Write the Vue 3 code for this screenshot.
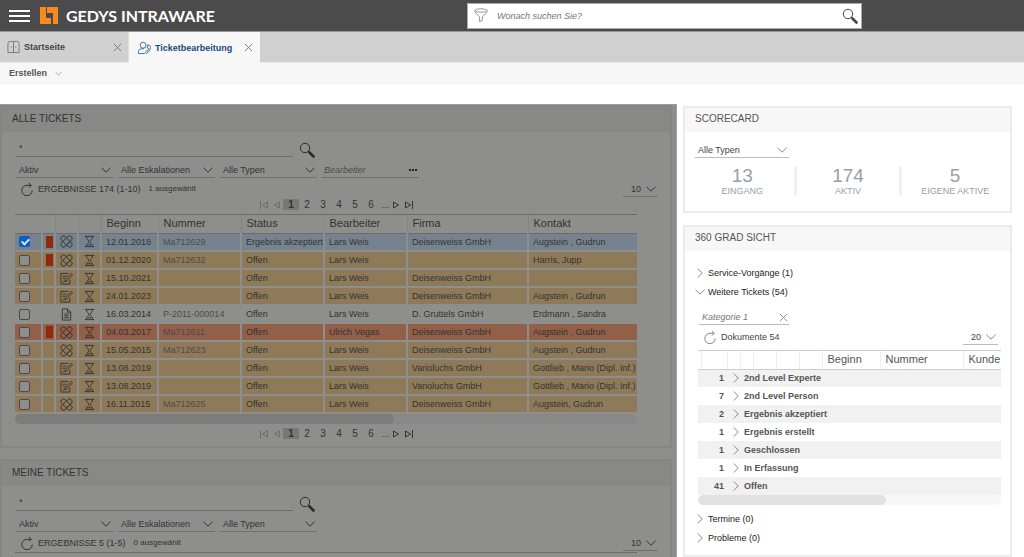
<script setup>
import { ref } from 'vue'

const filters = ['Aktiv', 'Alle Eskalationen', 'Alle Typen']
const pages = [1, 2, 3, 4, 5, 6]
const columns = ['Beginn', 'Nummer', 'Status', 'Bearbeiter', 'Firma', 'Kontakt']

const tickets = ref([
  { checked: true, tone: 'blue', flag: true, icon: 'patch', cells: ['12.01.2018', 'Ma712629', 'Ergebnis akzeptiert', 'Lars Weis', 'Deisenweiss GmbH', 'Augstein , Gudrun'] },
  { checked: false, tone: 'tan', flag: true, icon: 'patch', cells: ['01.12.2020', 'Ma712632', 'Offen', 'Lars Weis', '', 'Harris, Jupp'] },
  { checked: false, tone: 'tan', flag: false, icon: 'edit', cells: ['15.10.2021', '', 'Offen', 'Lars Weis', 'Deisenweiss GmbH', ''] },
  { checked: false, tone: 'tan', flag: false, icon: 'edit', cells: ['24.01.2023', '', 'Offen', 'Lars Weis', 'Deisenweiss GmbH', 'Augstein , Gudrun'] },
  { checked: false, tone: 'plain', flag: false, icon: 'doc', cells: ['16.03.2014', 'P-2011-000014', 'Offen', 'Lars Weis', 'D. Gruttels GmbH', 'Erdmann , Sandra'] },
  { checked: false, tone: 'red', flag: true, icon: 'patch', cells: ['04.03.2017', 'Ma712611', 'Offen', 'Ulrich Vegas', 'Deisenweiss GmbH', 'Augstein , Gudrun'] },
  { checked: false, tone: 'tan', flag: false, icon: 'patch', cells: ['15.05.2015', 'Ma712623', 'Offen', 'Lars Weis', 'Deisenweiss GmbH', 'Augstein , Gudrun'] },
  { checked: false, tone: 'tan', flag: false, icon: 'edit', cells: ['13.08.2019', '', 'Offen', 'Lars Weis', 'Varioluchs GmbH', 'Gottlieb , Mario (Dipl. Inf.)'] },
  { checked: false, tone: 'tan', flag: false, icon: 'edit', cells: ['13.08.2019', '', 'Offen', 'Lars Weis', 'Varioluchs GmbH', 'Gottlieb , Mario (Dipl. Inf.)'] },
  { checked: false, tone: 'tan', flag: false, icon: 'patch', cells: ['16.11.2015', 'Ma712625', 'Offen', 'Lars Weis', 'Deisenweiss GmbH', 'Augstein, Gudrun'] }
])

const panels = [
  { title: 'ALLE TICKETS', result: 'ERGEBNISSE 174 (1-10)', selected: '1 ausgewählt', full: true },
  { title: 'MEINE TICKETS', result: 'ERGEBNISSE 5 (1-5)', selected: '0 ausgewählt', full: false }
]

const scores = [
  { value: 13, label: 'EINGANG' },
  { value: 174, label: 'AKTIV' },
  { value: 5, label: 'EIGENE AKTIVE' }
]

const groups = [
  { count: 1, name: '2nd Level Experte' },
  { count: 7, name: '2nd Level Person' },
  { count: 2, name: 'Ergebnis akzeptiert' },
  { count: 1, name: 'Ergebnis erstellt' },
  { count: 1, name: 'Geschlossen' },
  { count: 1, name: 'In Erfassung' },
  { count: 41, name: 'Offen' }
]
</script>

<template>
  <div class="app">
    <svg class="defs" aria-hidden="true">
      <symbol id="chev" viewBox="0 0 10 6"><path d="M.5 .8l4.500 4.400L9.500 .8" /></symbol>
      <symbol id="chev-right" viewBox="0 0 6 10"><path d="M.8 .5l4.400 4.500L.8 9.500" /></symbol>
      <symbol id="cross" viewBox="0 0 10 10"><path d="M1 1l8 8M9 1l-8 8" /></symbol>
      <symbol id="lens" viewBox="0 0 16 16">
        <circle cx="6" cy="6" r="4.7" />
        <path d="M9.3 9.3l1.5 1.5" />
        <path d="M10.5 10.5l4 4" stroke-width="2.6" stroke-linecap="round" />
      </symbol>
      <symbol id="reload" viewBox="0 0 12 13">
        <path d="M11.200 7.500A5.200 5.200 0 1 1 6 2.300H10M8 0l2.300 2.300L8 4.600" />
      </symbol>
      <symbol id="patch" viewBox="0 0 14 14">
        <g transform="rotate(45 7 7)">
          <rect x="-.4" y="4.2" width="14.8" height="5.6" rx="2.8" />
          <path d="M4.2 4.2V2.400a2.800 2.800 0 0 1 5.600 0v9.200a2.800 2.800 0 0 1-5.600 0V4.200M9.800 4.200v5.600" />
        </g>
      </symbol>
      <symbol id="edit" viewBox="0 0 14 14">
        <path d="M10.500 8.500v4.500h-9.500V1.500h8M3 4.500h4M3 6.800h2.500M3 10.800l2.500-.8M5.300 10.300l.7-2.500L12 1.500l1.500 1.300L7.700 9.300z" />
      </symbol>
      <symbol id="doc" viewBox="0 0 14 14">
        <path d="M2.500 1h5.500l3.500 3.500V13h-9zM8 1v3.500h3.500M4.500 6.500h5M4.500 8.500h5M4.500 10.500h5" />
      </symbol>
      <symbol id="glass" viewBox="0 0 12 14">
        <path d="M1 1.500h10M1 12.500h10M2.500 1.500c0 3 2.700 3.500 2.700 5.500s-2.700 2.500-2.700 5.500M9.500 1.500c0 3-2.700 3.500-2.700 5.500s2.700 2.500 2.700 5.500M4 10.500h4" />
      </symbol>
      <symbol id="prev" viewBox="0 0 8 8"><path d="M6.500 1v6L1.500 4z" /></symbol>
      <symbol id="first" viewBox="0 0 8 8"><path d="M7.500 1v6L2.500 4zM.5 0v8" /></symbol>
      <symbol id="next" viewBox="0 0 8 8"><path d="M1.500 1v6l5-3z" /></symbol>
      <symbol id="last" viewBox="0 0 8 8"><path d="M.5 1v6l5-3zM7.500 0v8" /></symbol>
    </svg>

    <header class="top">
      <button class="burger" aria-label="Menü"><i></i><i></i><i></i></button>
      <svg class="logo" viewBox="0 0 18 17">
        <path fill="#f98a1c" d="M0 0h6v11h5v6H0zM7 0h11v17h-5V6H7z" />
      </svg>
      <span class="brand">GEDYS INTRAWARE</span>
      <form class="search" @submit.prevent>
        <svg class="ico funnel" viewBox="0 0 14 15">
          <ellipse cx="7" cy="2.500" rx="6" ry="1.700" />
          <path d="M1 2.500v1.500l4.600 5v4.700l2.800-1.200V9L13 4V2.500" />
        </svg>
        <input type="text" placeholder="Wonach suchen Sie?" aria-label="Suche" />
        <button aria-label="Suchen"><svg class="ico lens"><use href="#lens" /></svg></button>
      </form>
    </header>

    <nav class="tabs">
      <div class="tab">
        <svg class="ico tabico" viewBox="0 0 14 14">
          <path d="M1 13V3.500Q1 1 3.500 1h7Q13 1 13 3.500V13zM7 1v12M4 7h1.500M8.500 7H10" />
        </svg>
        <a href="#">Startseite</a>
        <button aria-label="Startseite schließen"><svg class="ico x"><use href="#cross" /></svg></button>
      </div>
      <div class="tab active">
        <svg class="ico tabico" viewBox="0 0 14 14">
          <circle cx="5.500" cy="4" r="3.200" />
          <path d="M7.500 13H.5v-2.500Q.5 8 3.500 7.800h3M10.500 3.500q3 0 3 3.200T9.500 13l-1.500-1.400 1.200-1.600 1 .5q1.200-1.200 1.200-3l-1.400-.5z" />
        </svg>
        <a href="#">Ticketbearbeitung</a>
        <button aria-label="Ticketbearbeitung schließen"><svg class="ico x"><use href="#cross" /></svg></button>
      </div>
    </nav>

    <div class="toolbar">
      <button>Erstellen <svg class="ico chev small"><use href="#chev" /></svg></button>
    </div>

    <main class="main">
      <div class="dim">
        <section v-for="p in panels" :key="p.title" class="panel">
          <h2>{{ p.title }}</h2>
          <div class="query">
            <input type="text" value="*" :aria-label="p.title + ' Suche'" />
            <button aria-label="Suchen"><svg class="ico lens"><use href="#lens" /></svg></button>
          </div>
          <div class="filters">
            <label v-for="f in filters" :key="f" class="pick">
              <select :aria-label="f"><option>{{ f }}</option></select>
              <svg class="ico chev"><use href="#chev" /></svg>
            </label>
            <div v-if="p.full" class="person">
              <input type="text" placeholder="Bearbeiter" aria-label="Bearbeiter" />
              <button aria-label="Bearbeiter auswählen"><i></i><i></i><i></i></button>
            </div>
          </div>
          <div class="results">
            <button aria-label="Aktualisieren"><svg class="ico reload"><use href="#reload" /></svg></button>
            <span class="count">{{ p.result }}</span>
            <small>{{ p.selected }}</small>
            <label class="pick size">
              <select aria-label="Anzahl"><option>10</option></select>
              <svg class="ico chev"><use href="#chev" /></svg>
            </label>
          </div>
          <template v-if="p.full">
            <div class="pager">
              <button class="off" aria-label="Erste Seite"><svg class="ico"><use href="#first" /></svg></button>
              <button class="off" aria-label="Vorige Seite"><svg class="ico"><use href="#prev" /></svg></button>
              <button v-for="n in pages" :key="n" class="num" :class="{ on: n === 1 }">{{ n }}</button>
              <span>...</span>
              <button aria-label="Nächste Seite"><svg class="ico"><use href="#next" /></svg></button>
              <button aria-label="Letzte Seite"><svg class="ico"><use href="#last" /></svg></button>
            </div>
            <div class="grid">
              <table>
                <colgroup>
                  <col class="c-check" /><col class="c-flag" /><col class="c-ico" /><col class="c-ico" />
                  <col class="c-date" /><col class="c-mid" /><col class="c-mid" /><col class="c-mid" />
                  <col class="c-firm" /><col />
                </colgroup>
                <thead>
                  <tr>
                    <th colspan="2"></th><th></th><th></th>
                    <th v-for="c in columns" :key="c">{{ c }}</th>
                  </tr>
                </thead>
                <tbody>
                  <tr v-for="(t, i) in tickets" :key="i" :class="t.tone">
                    <td class="box"><input v-model="t.checked" type="checkbox" :aria-label="'Ticket ' + t.cells[0]" /></td>
                    <td class="flag"><i v-if="t.flag"></i></td>
                    <td class="sym"><svg class="ico"><use :href="'#' + t.icon" /></svg></td>
                    <td class="sym"><svg class="ico"><use href="#glass" /></svg></td>
                    <td v-for="(c, j) in t.cells" :key="j" :class="{ soft: j === 1 }">{{ c }}</td>
                  </tr>
                </tbody>
              </table>
            </div>
            <div class="scroll"><i></i></div>
            <div class="pager bottom">
              <button class="off" aria-label="Erste Seite"><svg class="ico"><use href="#first" /></svg></button>
              <button class="off" aria-label="Vorige Seite"><svg class="ico"><use href="#prev" /></svg></button>
              <button v-for="n in pages" :key="n" class="num" :class="{ on: n === 1 }">{{ n }}</button>
              <span>...</span>
              <button aria-label="Nächste Seite"><svg class="ico"><use href="#next" /></svg></button>
              <button aria-label="Letzte Seite"><svg class="ico"><use href="#last" /></svg></button>
            </div>
          </template>
          <div v-else class="grid stub"></div>
        </section>
      </div>

      <aside class="side">
        <section class="panel">
          <h2>SCORECARD</h2>
          <label class="pick type">
            <select aria-label="Typ"><option>Alle Typen</option></select>
            <svg class="ico chev"><use href="#chev" /></svg>
          </label>
          <div class="scores">
            <div v-for="s in scores" :key="s.label"><b>{{ s.value }}</b><span>{{ s.label }}</span></div>
          </div>
        </section>

        <section class="panel view">
          <h2>360 GRAD SICHT</h2>
          <button class="node first"><svg class="ico right"><use href="#chev-right" /></svg>Service-Vorgänge (1)</button>
          <button class="node"><svg class="ico chev"><use href="#chev" /></svg>Weitere Tickets (54)</button>
          <div class="category">
            <input type="text" placeholder="Kategorie 1" aria-label="Kategorie 1" />
            <button aria-label="Kategorie leeren"><svg class="ico x"><use href="#cross" /></svg></button>
          </div>
          <div class="results">
            <button aria-label="Aktualisieren"><svg class="ico reload"><use href="#reload" /></svg></button>
            <span>Dokumente 54</span>
            <label class="pick size">
              <select aria-label="Anzahl"><option>20</option></select>
              <svg class="ico chev"><use href="#chev" /></svg>
            </label>
          </div>
          <div class="grid">
            <table>
              <colgroup>
                <col class="s-a" /><col class="s-b" /><col class="s-c" /><col class="s-c" /><col class="s-d" />
                <col class="s-d" /><col class="s-d" /><col class="s-date" /><col class="s-num" /><col />
              </colgroup>
              <thead>
                <tr><th v-for="n in 7" :key="n"></th><th>Beginn</th><th>Nummer</th><th>Kunde</th></tr>
              </thead>
              <tbody>
                <tr v-for="g in groups" :key="g.name">
                  <td colspan="2" class="amount">{{ g.count }}</td>
                  <td colspan="8" class="name">
                    <button><svg class="ico right"><use href="#chev-right" /></svg>{{ g.name }}</button>
                  </td>
                </tr>
              </tbody>
            </table>
          </div>
          <div class="scroll"><i></i></div>
          <button class="node after"><svg class="ico right"><use href="#chev-right" /></svg>Termine (0)</button>
          <button class="node"><svg class="ico right"><use href="#chev-right" /></svg>Probleme (0)</button>
        </section>
      </aside>
    </main>
  </div>
</template>

<style>
body { background: #fff; }
</style>

<style scoped>
.app {
  height: 100vh;
  overflow: hidden;
  display: flex;
  flex-direction: column;
  font-family: "Liberation Sans", Arial, sans-serif;
  font-size: 9px;
  line-height: 12px;
  color: #444;
}
.app * { box-sizing: border-box; }
.defs { position: absolute; width: 0; height: 0; }
button, input, select {
  font: inherit;
  color: inherit;
  background: none;
  border: 0;
  padding: 0;
  margin: 0;
  min-width: 0;
  outline: 0;
  border-radius: 0;
}
button { display: flex; align-items: center; text-align: left; }
select { appearance: none; }
a { color: inherit; text-decoration: none; }
.ico { fill: none; stroke: currentColor; stroke-width: 1; overflow: visible; flex: none; display: block; }
.chev { width: 10px; height: 6px; }
.chev.small { width: 7px; height: 5px; }
.right { width: 6px; height: 10px; }
.x { width: 9px; height: 9px; }
.lens { width: 16px; height: 16px; color: #444; }
.reload { width: 12px; height: 13px; }

.top {
  height: 32px;
  flex: none;
  background: #4b4b4b;
  border-bottom: 1px solid #999;
  display: flex;
  align-items: center;
  padding-left: 9px;
}
.burger { width: 21px; flex-direction: column; gap: 3px; }
.burger i { width: 21px; height: 2px; background: #fff; }
.logo { width: 18px; height: 17px; margin-left: 10px; flex: none; }
.brand {
  margin-left: 8px;
  flex: 1;
  color: #fff;
  font-family: Lato, "Open Sans", sans-serif;
  font-size: 16px;
  font-weight: 700;
  line-height: 24px;
  white-space: nowrap;
}
.search {
  width: 395px;
  height: 26px;
  margin-right: 162px;
  background: #fff;
  border: 1px solid #aaa;
  display: flex;
  align-items: center;
  padding: 0 3px 0 6px;
}
.funnel { width: 14px; height: 15px; color: #999; }
.search input { flex: 1; margin-left: 9px; font-style: italic; }
input::placeholder { color: #777; opacity: 1; }

.tabs {
  height: 31px;
  flex: none;
  background: #d0d0d0;
  border-bottom: 1px solid #ececec;
  display: flex;
}
.tab {
  width: 129px;
  height: 30px;
  display: flex;
  align-items: center;
  padding: 0 6px 0 7px;
  font-weight: bold;
  border-right: 1px solid #ddd;
}
.tab .tabico { width: 13px; height: 14px; color: #777; }
.tab a { flex: 1; margin-left: 4px; }
.tab button { color: #777; }
.tab.active { width: 131px; height: 31px; background: #f7f7f7; color: #174a7c; padding: 0 7px 0 9px; border: 0; }
.tab.active .tabico { color: #3f6c9c; }

.toolbar { height: 22px; flex: none; background: #f7f7f7; padding: 4px 9px; font-weight: bold; color: #555; }
.toolbar svg { margin-left: 8px; color: #888; }

.main {
  flex: 1;
  min-height: 0;
  margin-top: 19px;
  display: grid;
  grid-template-columns: minmax(0, 1fr) 341px;
  column-gap: 6px;
}
.dim {
  background: #8e8e8c;
  color: #333;
  border: 1px solid #9e9e9d;
  border-width: 1px 1px 0 0;
  padding-right: 4px;
  overflow: hidden;
}
.dim .panel { border: 2px solid #858584; margin-bottom: 11px; }
.dim .panel:last-child { border-bottom: 0; }
h2 { margin: 0; height: 25px; padding: 6px 10px; font-size: 10px; line-height: 12px; font-weight: normal; }
.dim h2 { background: #888886; color: #333; }

.query { display: flex; align-items: flex-end; gap: 6px; margin: 8px 0 0 14px; height: 17px; }
.query input { width: 277px; height: 17px; border-bottom: 1px solid #6d6d6c; padding: 0 3px; }
.query .lens { color: #2b2b2b; }
.query button { height: 14px; }

.pick { display: grid; align-items: center; border-bottom: 1px solid #707070; height: 15px; }
.pick select { grid-area: 1 / 1; width: 100%; height: 13px; padding-left: 3px; }
.pick svg { grid-area: 1 / 1; justify-self: end; margin-right: 2px; pointer-events: none; }
.filters { display: flex; gap: 5px; margin: 6px 0 0 14px; }
.filters .pick { width: 97px; }
.person { width: 97px; height: 15px; display: flex; align-items: center; border-bottom: 1px solid #707070; padding: 0 2px; }
.person input { flex: 1; font-style: italic; }
.person input::placeholder { color: #4c4c4c; }
.person button { gap: 1px; }
.person i { width: 2px; height: 2px; background: #222; }

.results { display: flex; align-items: center; height: 18px; margin: 2px 12px 0 19px; }
.results .count { margin-left: 5px; }
.results small { font-size: 8px; margin-left: 8px; }
.size { width: 35px; margin-left: auto; }
.size select { padding-left: 8px; }

.pager { display: flex; justify-content: center; align-items: center; height: 13px; margin-bottom: 3px; }
.pager .ico { width: 8px; height: 8px; }
.pager button { width: 13px; height: 11px; justify-content: center; }
.pager .num { width: 16px; font-size: 10px; }
.pager .on { background: #777776; font-weight: bold; }
.pager .off { color: #6c6c6b; }
.pager span { width: 10px; text-align: right; }
.pager.bottom { margin: 3px 0 6px; }

.grid { overflow: hidden; }
.dim .grid { margin: 0 33px 0 13px; border-top: 1px solid #6c6c6b; }
.dim .stub { height: 60px; }
table { width: 100%; table-layout: fixed; border-collapse: collapse; }
th, td { height: 18px; padding: 0 0 0 4px; text-align: left; white-space: nowrap; overflow: hidden; line-height: 12px; }
th { font-size: 11px; font-weight: normal; padding-left: 5px; padding-bottom: 2px; }
.dim th { border-right: 1px solid #858584; border-bottom: 1px solid #6c6c6b; }
.dim td { border: 2px solid #8e8e8c; border-width: 0 2px 2px 0; }
.dim th:last-child, .dim td:last-child { border-right: 0; }
.c-check { width: 27px; }
.c-flag { width: 13px; }
.c-ico { width: 23px; }
.c-date { width: 57px; }
.c-mid { width: 83px; }
.c-firm { width: 121px; }
.tan { background: #8e7a58; }
.red { background: #925f49; }
.blue { background: #76838f; }
.dim .soft { color: #4c4c4c; }
.box input {
  appearance: none;
  display: block;
  width: 11px;
  height: 11px;
  border: 1px solid #4a4a4a;
  border-radius: 2px;
  background: #8e8e8c;
}
.box input:checked { background: #0a5fc4; border-color: #0a5fc4; }
.box input:checked::after {
  content: "";
  display: block;
  width: 3px;
  height: 6px;
  margin: 0 0 0 3px;
  border: solid #ddd;
  border-width: 0 2px 2px 0;
  transform: rotate(45deg);
}
td.flag { padding-left: 3px; }
.flag i { display: block; width: 7px; height: 12px; background: #8f2a0d; }
.sym .ico { width: 13px; height: 13px; color: #333; }

.scroll { height: 10px; border-radius: 5px; display: flex; }
.scroll i { border-radius: 5px; }
.dim .scroll { margin: 0 33px 0 13px; background: #888887; }
.dim .scroll i { width: 61%; background: #7c7c7b; }

.side { padding: 2px 12px 0 0; min-width: 0; }
.side .panel { border: 2px solid #ebebeb; }
.side h2 { background: #f7f7f7; height: 24px; padding-top: 5px; color: #555; }
.view { margin-top: 12px; }
.side .pick { border-color: #bbb; }
.side svg { color: #888; }
.type { width: 94px; margin: 11px 0 0 10px; }
.scores { display: grid; grid-template-columns: repeat(3, 1fr); margin: 8px 2px 15px 6px; color: #98a0a7; }
.scores div { height: 30px; display: flex; flex-direction: column; align-items: center; border-right: 3px solid #f0f0f0; }
.scores div:last-child { border: 0; }
.scores b { font-size: 19px; line-height: 20px; font-weight: normal; }
.scores span { line-height: 11px; }
.node { height: 19px; margin-left: 12px; color: #222; width: 200px; }
.node.first { margin-top: 12px; }
.node .right { margin-right: 5px; }
.node .chev { margin-left: -2px; margin-right: 3px; }
.category { display: flex; align-items: center; width: 90px; height: 15px; margin: 9px 0 0 14px; border-bottom: 1px solid #bbb; padding: 0 1px 0 3px; font-style: italic; }
.category input { flex: 1; }
.side .results { margin: 3px 12px 0 19px; }
.side .results span { margin-left: 5px; }
.side .grid { margin: 4px 9px 0 13px; border-top: 1px solid #ccc; }
.side th { border-right: 1px solid #eee; border-bottom: 1px solid #ccc; color: #555; }
.side th:last-child { border-right: 0; }
.side tbody tr:nth-child(odd) { background: #f1f1f1; }
.s-a { width: 3px; }
.s-b { width: 26px; }
.s-c { width: 13px; }
.s-d { width: 23px; }
.s-date { width: 58px; }
.s-num { width: 83px; }
.side td { font-weight: bold; color: #555; }
.amount { text-align: right; padding: 0 3px 0 0; }
.side .name { padding-left: 6px; }
.name .right { margin-right: 5px; }
.side .scroll { margin: 0 9px 0 13px; background: #f7f7f7; }
.side .scroll i { width: 62%; background: #e2e2e2; }
.node.after { margin-top: 4px; }
.node:last-child { margin-bottom: 8px; }
</style>
